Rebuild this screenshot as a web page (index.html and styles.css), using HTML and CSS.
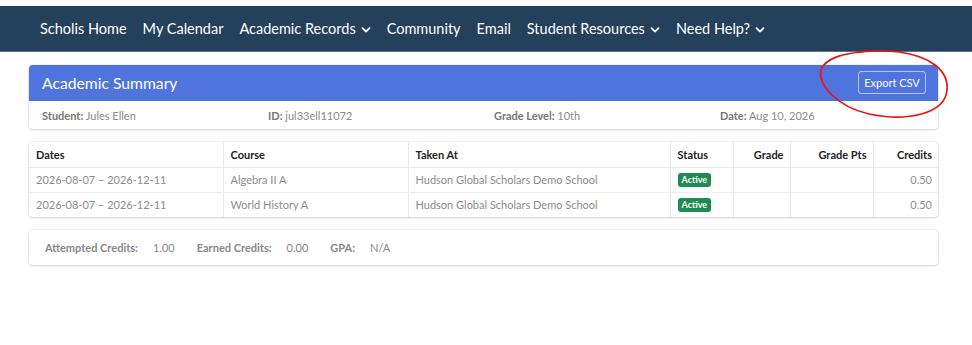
FILE: index.html
```html
<!DOCTYPE html>
<html lang="en">
<head>
<meta charset="utf-8">
<title>Academic Summary</title>
<link rel="stylesheet" href="styles.css">
</head>
<body>
<nav class="topnav">
  <a class="nav-item">Scholis Home</a>
  <a class="nav-item">My Calendar</a>
  <a class="nav-item">Academic Records <svg class="chev" viewBox="0 0 10 6"><path d="M1.5 1.2 5 4.6 8.5 1.2"/></svg></a>
  <a class="nav-item">Community</a>
  <a class="nav-item">Email</a>
  <a class="nav-item">Student Resources <svg class="chev" viewBox="0 0 10 6"><path d="M1.5 1.2 5 4.6 8.5 1.2"/></svg></a>
  <a class="nav-item">Need Help? <svg class="chev" viewBox="0 0 10 6"><path d="M1.5 1.2 5 4.6 8.5 1.2"/></svg></a>
</nav>

<main class="content">
  <section class="card summary">
    <header class="summary-head">
      <h1 class="summary-title">Academic Summary</h1>
      <button class="export-btn">Export CSV</button>
    </header>
    <div class="summary-info">
      <div class="info-col"><b>Student:</b> Jules Ellen</div>
      <div class="info-col"><b>ID:</b> jul33ell11072</div>
      <div class="info-col"><b>Grade Level:</b> 10th</div>
      <div class="info-col"><b>Date:</b> Aug 10, 2026</div>
    </div>
  </section>

  <section class="card table-card">
    <table class="courses">
      <colgroup>
        <col class="c-dates"><col class="c-course"><col class="c-taken"><col class="c-status"><col class="c-grade"><col class="c-pts"><col class="c-credits">
      </colgroup>
      <thead>
        <tr><th>Dates</th><th>Course</th><th>Taken At</th><th>Status</th><th class="num">Grade</th><th class="num">Grade Pts</th><th class="num">Credits</th></tr>
      </thead>
      <tbody>
        <tr><td>2026-08-07 – 2026-12-11</td><td>Algebra II A</td><td>Hudson Global Scholars Demo School</td><td><span class="badge">Active</span></td><td class="num"></td><td class="num"></td><td class="num">0.50</td></tr>
        <tr><td>2026-08-07 – 2026-12-11</td><td>World History A</td><td>Hudson Global Scholars Demo School</td><td><span class="badge">Active</span></td><td class="num"></td><td class="num"></td><td class="num">0.50</td></tr>
      </tbody>
    </table>
  </section>

  <section class="card totals">
    <span class="t-label">Attempted Credits:</span><span class="t-val">1.00</span>
    <span class="t-label">Earned Credits:</span><span class="t-val">0.00</span>
    <span class="t-label">GPA:</span><span class="t-val">N/A</span>
  </section>
</main>

<svg class="annotation" viewBox="0 0 140 80" aria-hidden="true">
  <path d="M46 4 C28 5 8 10 4 22 C1 36 18 58 52 66 C90 74 128 66 130 42 C132 22 112 8 82 4 C66 2 54 3 40 4"/>
</svg>
</body>
</html>
```

FILE: styles.css
```css
* { box-sizing: border-box; }

html, body {
  margin: 0;
  padding: 0;
  background: #ffffff;
}

body {
  position: relative;
  width: 972px;
  height: 345px;
  overflow: hidden;
  font-family: "Lato", "Noto Sans", sans-serif;
  color: #333;
}

.topnav {
  margin-top: 6px;
  height: 46px;
  background: #24405b;
  border-bottom: 1px solid #5c7388;
  display: flex;
  align-items: center;
  padding-left: 40px;
}

.nav-item {
  color: #ffffff;
  font-family: "Lato", sans-serif;
  font-size: 14.5px;
  margin-right: 16px;
  display: flex;
  align-items: center;
  white-space: nowrap;
}

.chev {
  width: 10px;
  height: 6px;
  margin-left: 5px;
  margin-top: 2px;
  fill: none;
  stroke: #fff;
  stroke-width: 1.8;
  stroke-linecap: round;
  stroke-linejoin: round;
}

.content {
  padding: 13px 34px 0 29px;
  display: flex;
  flex-direction: column;
}

.card {
  background: #fff;
  border-radius: 4px;
  box-shadow: 0 1px 3px rgba(0, 0, 0, 0.16), 0 0 0 1px rgba(0, 0, 0, 0.04);
  overflow: hidden;
}

.summary-head {
  background: #4f74de;
  height: 36px;
  display: flex;
  align-items: center;
  justify-content: space-between;
  padding: 0 12px 0 13px;
}

.summary-title {
  margin: 0;
  color: #fff;
  font-weight: 400;
  font-size: 15.7px;
  font-family: "Lato", sans-serif;
}

.export-btn {
  background: transparent;
  border: 1px solid rgba(255, 255, 255, 0.6);
  border-radius: 3px;
  color: #fff;
  font-family: "Lato", sans-serif;
  font-size: 11px;
  height: 23px;
  width: 68px;
  padding: 0;
  margin-top: -1px;
}

.summary-info {
  display: flex;
  height: 28px;
  align-items: center;
  padding-left: 13px;
  font-size: 11px;
  color: #8a8a8a;
}

.info-col {
  width: 226px;
  flex-shrink: 0;
}

.info-col b {
  color: #777;
  font-weight: 700;
}

.table-card {
  margin-top: 13px;
}

.courses {
  width: 100%;
  border-collapse: collapse;
  font-size: 11px;
}

.c-dates { width: 194px; }
.c-course { width: 185px; }
.c-taken { width: 262px; }
.c-status { width: 63px; }
.c-grade { width: 57px; }
.c-pts { width: 83px; }

.courses th,
.courses td {
  border-right: 1px solid #e6e8ec;
  text-align: left;
  padding: 0 7px;
  white-space: nowrap;
}

.courses th:last-child,
.courses td:last-child { border-right: none; }

.courses th {
  height: 25px;
  color: #222;
  font-weight: 700;
  font-size: 11px;
  border-bottom: 1px solid #e6e8ec;
}

.courses td {
  height: 25px;
  color: #8c8c8c;
}

.courses tbody tr:first-child td {
  border-bottom: 1px solid #eceef1;
}

.courses .num { text-align: right; padding-right: 6px; }

.badge {
  display: inline-block;
  background: #1f8a51;
  color: #fff;
  font-size: 9px;
  font-weight: 700;
  padding: 2px 4px;
  border-radius: 3px;
  line-height: 10px;
}

.totals {
  margin-top: 13px;
  height: 35px;
  display: flex;
  align-items: center;
  padding-left: 16px;
  font-size: 11px;
}

.t-label {
  color: #888;
  font-weight: 700;
  margin-right: 15px;
}

.t-val {
  color: #888;
  margin-right: 22px;
}

.annotation {
  position: absolute;
  left: 817px;
  top: 48px;
  width: 140px;
  height: 80px;
  fill: none;
  stroke: #e8140f;
  stroke-width: 1.7;
  stroke-linecap: round;
}
```
